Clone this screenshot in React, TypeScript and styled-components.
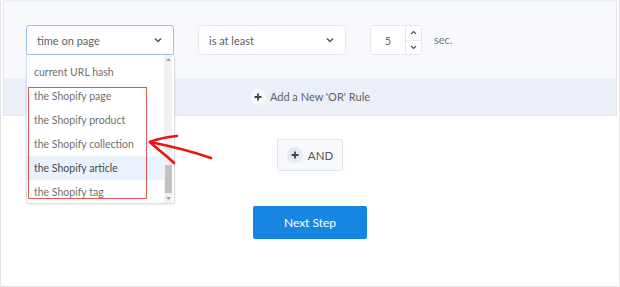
import styled, { createGlobalStyle } from 'styled-components';

const GlobalStyle = createGlobalStyle`
    html, body {
        margin: 0;
        padding: 0;
        background: #ffffff;
        font-family: Lato, "Open Sans", sans-serif;
    }
`;

const Frame = styled.div`
    position: relative;
    width: 620px;
    height: 287px;
    box-sizing: border-box;
    border: 1px solid #e4e4e4;
    border-top: none;
    padding: 0 2px;
    display: flex;
    flex-direction: column;
    align-items: stretch;
    background: #fff;
`;

const RulePanel = styled.div`
    border: 1px solid #e3e8f1;
    border-top: 2px solid #edf0f5;
    background: #f7f9fd;
`;

const RuleRow = styled.div`
    height: 76px;
    box-sizing: border-box;
    padding: 23px 0 0 22px;
    display: flex;
    align-items: flex-start;
    gap: 24px;
`;

const Select = styled.div<{ $focused?: boolean; $width: number }>`
    position: relative;
    width: ${p => p.$width}px;
    height: 30px;
    box-sizing: border-box;
    border: 1px solid ${p => (p.$focused ? '#9fc0f4' : '#e4e9f1')};
    border-radius: ${p => (p.$focused ? '3px 3px 0 0' : '3px')};
    background: #fff;
    display: flex;
    align-items: center;
    justify-content: space-between;
    padding: 0 11px 0 10px;
    font-size: 11px;
    color: #5f5f5f;
`;

const Chevron = () => (
    <svg width="8" height="6" viewBox="0 0 8 6">
        <path d="M1 1.5 L4 4.5 L7 1.5" fill="none" stroke="#555" strokeWidth="1.5" />
    </svg>
);

const NumberBox = styled.div`
    width: 52px;
    height: 30px;
    box-sizing: border-box;
    border: 1px solid #e4e9f1;
    border-radius: 3px;
    background: #fff;
    display: flex;
    font-size: 11px;
    color: #666;
`;

const NumberValue = styled.div`
    flex: 1;
    display: flex;
    align-items: center;
    justify-content: center;
`;

const Spinner = styled.div`
    width: 15px;
    border-left: 1px solid #e4e9f1;
    display: flex;
    flex-direction: column;
`;

const SpinBtn = styled.div<{ $top?: boolean }>`
    flex: 1;
    display: flex;
    align-items: center;
    justify-content: center;
    border-bottom: ${p => (p.$top ? '1px solid #e4e9f1' : 'none')};
`;

const Unit = styled.span`
    font-size: 11px;
    color: #777;
    margin-left: -12px;
    line-height: 30px;
`;

const OrBar = styled.div`
    height: 37px;
    background: #ebf0f8;
    display: flex;
    align-items: center;
    justify-content: center;
    gap: 4px;
    font-size: 11px;
    color: #5f5f5f;
`;

const PlusDot = styled.span<{ $bg: string }>`
    width: 16px;
    height: 16px;
    border-radius: 50%;
    background: ${p => p.$bg};
    display: inline-flex;
    align-items: center;
    justify-content: center;
`;

const Plus = () => (
    <svg width="8" height="8" viewBox="0 0 8 8">
        <path d="M4 0.5 V7.5 M0.5 4 H7.5" stroke="#444" strokeWidth="1.8" />
    </svg>
);

const Body = styled.div`
    display: flex;
    flex-direction: column;
    align-items: center;
    padding-top: 23px;
`;

const AndButton = styled.div`
    width: 66px;
    height: 32px;
    box-sizing: border-box;
    border: 1px solid #dfe5ef;
    border-radius: 2px;
    background: #f7f9fd;
    display: flex;
    align-items: center;
    justify-content: center;
    gap: 5px;
    font-size: 11.5px;
    color: #555;
`;

const NextButton = styled.div`
    margin-top: 35px;
    width: 114px;
    height: 33px;
    border-radius: 2px;
    background: #1686e2;
    color: #fff;
    font-size: 12px;
    display: flex;
    align-items: center;
    justify-content: center;
`;

const DropList = styled.div`
    position: absolute;
    left: 25px;
    top: 55px;
    width: 149px;
    height: 149px;
    box-sizing: border-box;
    border: 1px solid #d9dee6;
    border-top: none;
    border-radius: 0 0 3px 3px;
    background: #fff;
    display: flex;
    box-shadow: 0 1px 3px rgba(0, 0, 0, 0.08);
`;

const Items = styled.div`
    flex: 1;
    padding-top: 5px;
    overflow: hidden;
`;

const Item = styled.div<{ $active?: boolean }>`
    height: 24px;
    display: flex;
    align-items: center;
    padding-left: 7px;
    font-size: 10.5px;
    color: ${p => (p.$active ? '#4a4a4a' : '#707070')};
    background: ${p => (p.$active ? '#e9f2fd' : 'transparent')};
`;

const ScrollTrack = styled.div`
    width: 8px;
    margin-right: 2px;
    background: #f1f1f1;
    display: flex;
    flex-direction: column;
    align-items: center;
    justify-content: space-between;
    padding: 3px 0;
`;

const ScrollThumb = styled.div`
    width: 7px;
    height: 28px;
    background: #c1c1c1;
    margin-top: auto;
    margin-bottom: 4px;
`;

const Mark = styled.div`
    position: absolute;
    left: 27px;
    top: 87px;
    width: 119px;
    height: 112px;
    box-sizing: border-box;
    border: 1px solid #e05555;
    pointer-events: none;
`;

const ArrowMark = styled.svg`
    position: absolute;
    left: 140px;
    top: 128px;
    pointer-events: none;
`;

const options = [
    'current URL hash',
    'the Shopify page',
    'the Shopify product',
    'the Shopify collection',
    'the Shopify article',
    'the Shopify tag',
];

export default function App() {
    return (
        <>
            <GlobalStyle />
            <Frame>
                <RulePanel>
                    <RuleRow>
                        <Select $focused $width={148}>
                            <span>time on page</span>
                            <Chevron />
                        </Select>
                        <Select $width={148}>
                            <span>is at least</span>
                            <Chevron />
                        </Select>
                        <NumberBox>
                            <NumberValue>5</NumberValue>
                            <Spinner>
                                <SpinBtn $top>
                                    <svg width="7" height="5" viewBox="0 0 7 5">
                                        <path d="M1 4 L3.5 1.5 L6 4" fill="none" stroke="#555" strokeWidth="1.2" />
                                    </svg>
                                </SpinBtn>
                                <SpinBtn>
                                    <svg width="7" height="5" viewBox="0 0 7 5">
                                        <path d="M1 1 L3.5 3.5 L6 1" fill="none" stroke="#555" strokeWidth="1.2" />
                                    </svg>
                                </SpinBtn>
                            </Spinner>
                        </NumberBox>
                        <Unit>sec.</Unit>
                    </RuleRow>
                    <OrBar>
                        <PlusDot $bg="#f6f8fc">
                            <Plus />
                        </PlusDot>
                        Add a New 'OR' Rule
                    </OrBar>
                </RulePanel>
                <Body>
                    <AndButton>
                        <PlusDot $bg="#e6ebf3">
                            <Plus />
                        </PlusDot>
                        AND
                    </AndButton>
                    <NextButton>Next Step</NextButton>
                </Body>

                <DropList>
                    <Items>
                        {options.map(o => (
                            <Item key={o} $active={o === 'the Shopify article'}>
                                {o}
                            </Item>
                        ))}
                    </Items>
                    <ScrollTrack>
                        <svg width="5" height="3" viewBox="0 0 5 3">
                            <path d="M0 3 L2.5 0 L5 3 Z" fill="#a0a0a0" />
                        </svg>
                        <ScrollThumb />
                        <svg width="5" height="3" viewBox="0 0 5 3">
                            <path d="M0 0 L2.5 3 L5 0 Z" fill="#a0a0a0" />
                        </svg>
                    </ScrollTrack>
                </DropList>
                <Mark />
                <ArrowMark width="80" height="40" viewBox="0 0 80 40">
                    <g fill="none" stroke="#ee1111" strokeWidth="2.6" strokeLinecap="round" strokeLinejoin="round">
                        <path d="M9 14 C 16 11, 26 9, 36 8" />
                        <path d="M9 14 C 24 17, 44 21, 70 30" />
                        <path d="M9 14 C 16 21, 26 28, 33 35" />
                    </g>
                </ArrowMark>
            </Frame>
        </>
    );
}
